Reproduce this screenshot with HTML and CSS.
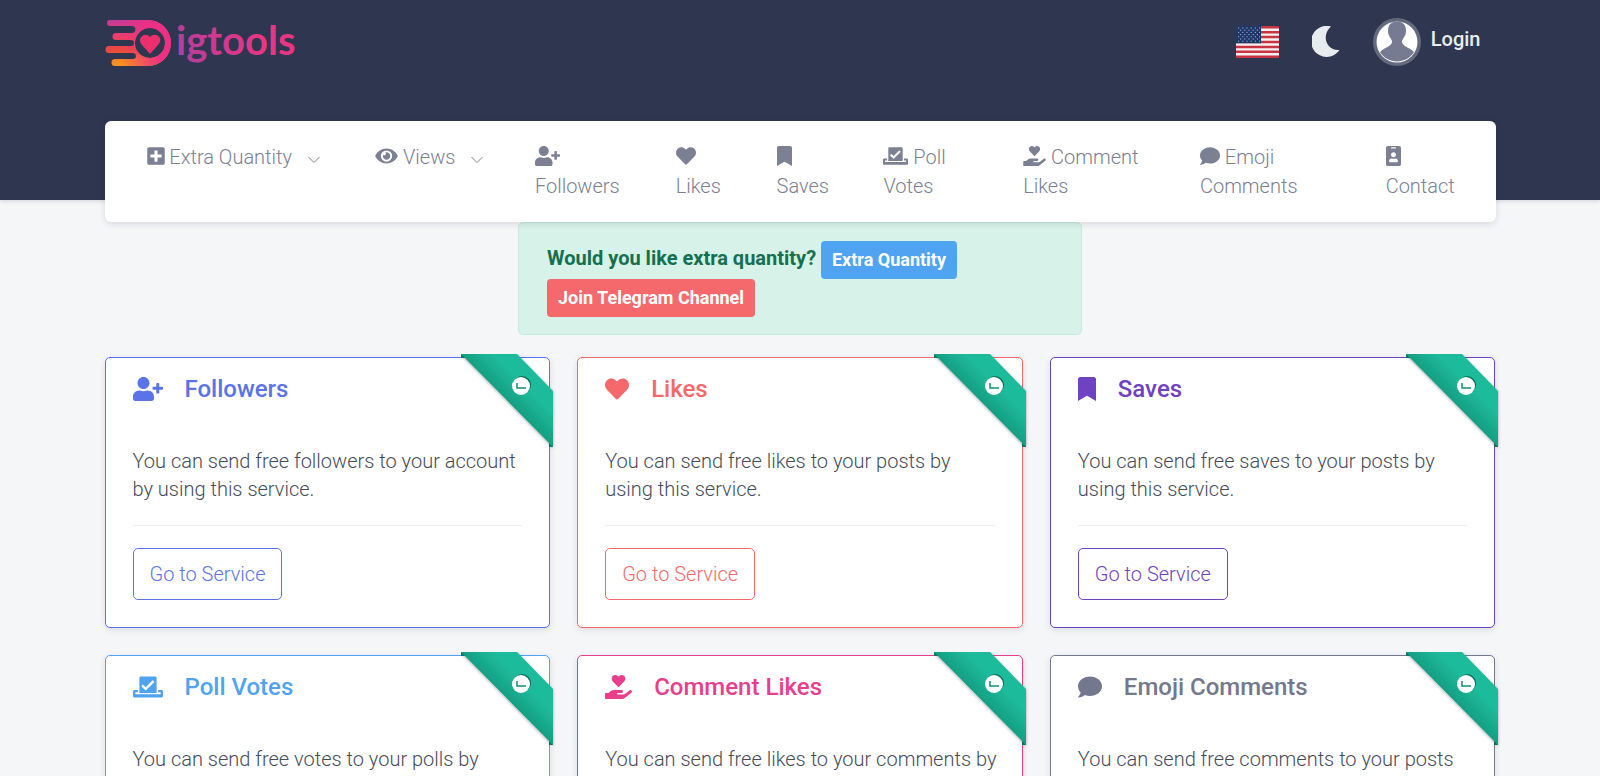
FILE: index.html
```html
<!DOCTYPE html>
<html lang="en">
<head>
<meta charset="utf-8">
<meta name="viewport" content="width=device-width, initial-scale=1">
<title>igtools</title>
<link rel="stylesheet" href="styles.css">
</head>
<body>
<svg class="sprite" aria-hidden="true">
  <symbol id="plus" viewBox="0 0 448 512"><path d="M400 32H48C21.500 32 0 53.500 0 80v352c0 26.500 21.500 48 48 48h352c26.500 0 48-21.500 48-48V80c0-26.500-21.500-48-48-48zm-32 252c0 6.600-5.400 12-12 12h-92v92c0 6.600-5.400 12-12 12h-56c-6.600 0-12-5.400-12-12v-92H92c-6.600 0-12-5.400-12-12v-56c0-6.600 5.400-12 12-12h92v-92c0-6.600 5.400-12 12-12h56c6.600 0 12 5.400 12 12v92h92c6.600 0 12 5.400 12 12v56z"/></symbol>
  <symbol id="eye" viewBox="0 0 576 512"><path d="M572.520 241.400C518.290 135.590 410.930 64 288 64S57.680 135.640 3.480 241.410a32.350 32.350 0 0 0 0 29.190C57.710 376.410 165.070 448 288 448s230.320-71.640 284.520-177.410a32.350 32.350 0 0 0 0-29.190zM288 400a144 144 0 1 1 144-144 143.930 143.930 0 0 1-144 144zm0-240a95.310 95.310 0 0 0-25.310 3.790 47.850 47.850 0 0 1-66.900 66.900A95.780 95.780 0 1 0 288 160z"/></symbol>
  <symbol id="user-plus" viewBox="0 0 640 512"><path d="M624 208h-64v-64c0-8.800-7.200-16-16-16h-32c-8.800 0-16 7.200-16 16v64h-64c-8.800 0-16 7.200-16 16v32c0 8.800 7.200 16 16 16h64v64c0 8.800 7.200 16 16 16h32c8.800 0 16-7.200 16-16v-64h64c8.800 0 16-7.200 16-16v-32c0-8.800-7.200-16-16-16zm-400 48c70.700 0 128-57.300 128-128S294.700 0 224 0 96 57.300 96 128s57.300 128 128 128zm89.600 32h-16.700c-22.200 10.200-46.900 16-72.900 16s-50.600-5.800-72.900-16h-16.700C60.200 288 0 348.200 0 422.400V464c0 26.500 21.500 48 48 48h352c26.500 0 48-21.500 48-48v-41.600c0-74.200-60.200-134.400-134.400-134.400z"/></symbol>
  <symbol id="heart" viewBox="0 0 512 512"><path d="M462.300 62.600C407.500 15.900 326 24.300 275.700 76.200L256 96.500l-19.700-20.300C186.100 24.300 104.500 15.900 49.700 62.600c-62.800 53.600-66.100 149.800-9.900 207.900l193.500 199.800c12.500 12.900 32.800 12.900 45.300 0l193.500-199.800c56.300-58.100 53-154.300-9.800-207.900z"/></symbol>
  <symbol id="bookmark" viewBox="0 0 384 512"><path d="M0 512V48C0 21.500 21.500 0 48 0h288c26.500 0 48 21.500 48 48v464L192 400 0 512z"/></symbol>
  <symbol id="ballot" viewBox="0 0 640 512"><path fill-rule="evenodd" d="M168 32h304c18 0 32 14 32 32v320H136V64c0-18 14-32 32-32zm102 227l-45-45c-7-7-18-7-25 0l-13 13c-7 7-7 18 0 25l70 70c7 7 18 7 25 0l164-164c7-7 7-18 0-25l-13-13c-7-7-18-7-25 0L270 259z"/><path d="M32 320h72v48H60c-6 0-10 4-10 10v22c0 6 4 10 10 10h520c6 0 10-4 10-10v-22c0-6-4-10-10-10h-44v-48h72c18 0 32 14 32 32v96c0 18-14 32-32 32H32c-18 0-32-14-32-32v-96c0-18 14-32 32-32z"/></symbol>
  <symbol id="hand-heart" viewBox="0 0 576 512"><path d="M275.300 250.500c7 7.400 18.400 7.400 25.500 0l108.900-114.200c31.600-33.200 29.800-88.200-5.600-118.800-30.800-26.700-76.700-21.900-104.900 7.700L288 36.900l-11.100-11.600C248.700-4.400 202.800-9.200 172 17.500c-35.300 30.600-37.200 85.600-5.600 118.800l108.900 114.200zm290 77.600c-11.800-10.700-30.200-10-42.600 0L430.300 402c-11.300 9.100-25.400 14-40 14H272c-8.800 0-16-7.200-16-16s7.200-16 16-16h78.300c15.900 0 30.700-10.900 33.300-26.600 3.300-20-12.100-37.400-31.600-37.400H192c-27 0-53.100 9.300-74.100 26.300L71.400 384H16c-8.800 0-16 7.200-16 16v96c0 8.800 7.200 16 16 16h356.800c14.500 0 28.600-4.900 40-14L564 377c15.200-12.100 16.400-35.300 1.300-48.900z"/></symbol>
  <symbol id="comment" viewBox="0 0 512 512"><path d="M256 32C114.600 32 0 125.100 0 240c0 49.600 21.400 95 57 130.700C44.500 421.100 2.700 466 2.200 466.500c-2.200 2.300-2.800 5.700-1.500 8.700S4.800 480 8 480c66.300 0 116-31.800 140.600-51.400 32.700 12.300 69 19.400 107.400 19.400 141.400 0 256-93.100 256-208S397.400 32 256 32z"/></symbol>
  <symbol id="badge" viewBox="0 0 384 512"><path d="M336 0H48C21.500 0 0 21.500 0 48v416c0 26.500 21.500 48 48 48h288c26.500 0 48-21.500 48-48V48c0-26.500-21.500-48-48-48zM144 32h96c8.800 0 16 7.200 16 16s-7.200 16-16 16h-96c-8.800 0-16-7.200-16-16s7.200-16 16-16zm48 128c35.300 0 64 28.700 64 64s-28.700 64-64 64-64-28.700-64-64 28.700-64 64-64zm112 236.800c0 10.600-10 19.200-22.400 19.200H102.400C90 416 80 407.400 80 396.800v-19.200c0-31.800 30.100-57.600 67.200-57.600h5c12.300 5.100 25.700 8 39.800 8s27.600-2.900 39.800-8h5c37.100 0 67.200 25.800 67.200 57.600v19.200z"/></symbol>
  <symbol id="ribbon" viewBox="0 0 100 100">
    <path d="M0 0h12v4H0zM88 80h4v13h-4z" fill="#0f8268"/>
    <path d="M0 0H56L92 37V93Z" fill="url(#band)" filter="url(#band-shadow)"/>
    <circle cx="61" cy="31" r="9" fill="#0b6b58"/>
    <circle cx="60" cy="32" r="9" fill="#fff"/>
    <path d="M56 29v5h9" fill="none" stroke="#0f8f75" stroke-width="1.500"/>
  </symbol>
  <defs>
    <linearGradient id="band" gradientUnits="userSpaceOnUse" x1="46" y1="46" x2="73" y2="19">
      <stop offset="0" stop-color="#179f83"/><stop offset=".6" stop-color="#1cbb9b"/><stop offset="1" stop-color="#1cbb9b"/>
    </linearGradient>
    <filter id="band-shadow"><feDropShadow dx="0" dy="1" stdDeviation="1.500" flood-opacity=".35"/></filter>
  </defs>
</svg>

<header class="header">
  <div class="container topbar">
    <a class="logo" href="#" aria-label="igtools">
      <svg width="200" height="60" viewBox="0 2 200 60">
        <defs>
          <linearGradient id="mark" gradientUnits="userSpaceOnUse" x1="12" y1="50" x2="10" y2="4">
            <stop offset="0" stop-color="#f7931e"/><stop offset=".12" stop-color="#f58a25"/><stop offset=".32" stop-color="#ec4a3a"/><stop offset=".65" stop-color="#ea3f6d"/><stop offset="1" stop-color="#c13a9b"/>
          </linearGradient>
          <linearGradient id="glow" gradientUnits="userSpaceOnUse" x1="14" y1="30" x2="52" y2="24">
            <stop offset="0" stop-color="#ee2f80" stop-opacity="0"/><stop offset="1" stop-color="#ee2f86"/>
          </linearGradient>
          <linearGradient id="word" gradientUnits="userSpaceOnUse" x1="70" y1="50" x2="150" y2="14">
            <stop offset="0" stop-color="#ad3fa0"/><stop offset="1" stop-color="#e93582"/>
          </linearGradient>
          <path id="comet" fill-rule="evenodd" d="M5 4H43A23 23 0 0 1 43 50H10A3 3 0 0 1 10 43H28A3 3 0 0 0 28 37H4A3 3 0 0 1 4 30H26A3 3 0 0 0 26 24H11A3 3 0 0 1 11 17H27A3 3 0 0 0 27 10H5A3 3 0 0 1 5 4ZM45 12A15 15 0 1 0 45 42A15 15 0 1 0 45 12Z"/>
        </defs>
        <use href="#comet" fill="url(#mark)"/>
        <use href="#comet" fill="url(#glow)"/>
        <path fill="#ee2f6d" d="M45 38L37 29C31 22 40 15 45 21C50 15 60 22 53 29Z"/>
        <text class="wordmark" x="71" y="39" fill="url(#word)">igtools</text>
      </svg>
    </a>
    <div class="tools">
      <button class="tool" type="button" aria-label="Language">
        <svg width="43" height="32" viewBox="0 0 43 32">
          <path fill="#f4f0f2" d="M0 0h43v32H0z"/>
          <path stroke="#c9323f" stroke-width="2.460" d="M0 1.230h43M0 6.150h43M0 11.080h43M0 16h43M0 20.920h43M0 25.850h43M0 30.770h43"/>
          <path fill="#1d3768" d="M0 0h25v17.230H0z"/>
          <path stroke="#a9b4cc" stroke-width="1" stroke-dasharray="1.200 3" d="M2 2h22M4 4.200h20M2 6.400h22M4 8.600h20M2 10.800h22M4 13h20M2 15.200h22"/>
        </svg>
      </button>
      <button class="tool" type="button" aria-label="Dark mode">
        <svg width="28" height="32" viewBox="0 2 28 32"><path fill="#e9ecef" d="M19 2.500A15.500 15.500 0 1 0 27.500 26C14 27 9 11 19 2.500Z"/></svg>
      </button>
      <a class="login" href="#">
        <svg width="48" height="48" viewBox="0 0 48 48">
          <circle cx="24" cy="24" r="24" fill="#646a7e"/><circle cx="24" cy="24" r="20.500" fill="#fff"/>
          <path fill="#777b92" d="M24 3.500C30 3.500 33 7 33 13C33 18 30 20 29 23C28 28 38 30 41 34A20 20 0 0 1 7 34C10 30 20 28 19 23C18 20 15 18 15 13C15 7 18 3.500 24 3.500Z"/>
        </svg>
        <span>Login</span>
      </a>
    </div>
  </div>
</header>

<nav class="container nav" aria-label="Main">
  <button class="item" type="button"><svg class="ico w18"><use href="#plus"/></svg> Extra Quantity <svg class="chev" viewBox="0 0 12 8"><path d="M.5 1L6 6.500 11.500 1"/></svg></button>
  <button class="item" type="button"><svg class="ico w23"><use href="#eye"/></svg> Views <svg class="chev" viewBox="0 0 12 8"><path d="M.5 1L6 6.500 11.500 1"/></svg></button>
  <a class="item" href="#"><svg class="ico w25"><use href="#user-plus"/></svg><br>Followers</a>
  <a class="item" href="#"><svg class="ico w20"><use href="#heart"/></svg><br>Likes</a>
  <a class="item" href="#"><svg class="ico w15"><use href="#bookmark"/></svg><br>Saves</a>
  <a class="item" href="#"><svg class="ico w25"><use href="#ballot"/></svg> Poll<br>Votes</a>
  <a class="item" href="#"><svg class="ico w23"><use href="#hand-heart"/></svg> Comment<br>Likes</a>
  <a class="item" href="#"><svg class="ico w20"><use href="#comment"/></svg> Emoji<br>Comments</a>
  <a class="item" href="#"><svg class="ico w15"><use href="#badge"/></svg><br>Contact</a>
</nav>

<main class="container">
  <div class="alert">
    <strong>Would you like extra quantity?</strong>
    <a class="pill blue" href="#">Extra Quantity</a>
    <a class="pill red" href="#">Join Telegram Channel</a>
  </div>
  <div class="cards">
    <section class="card indigo">
      <svg class="ribbon"><use href="#ribbon"/></svg>
      <h2><svg class="big b30"><use href="#user-plus"/></svg>Followers</h2>
      <p>You can send free followers to your account by using this service.</p>
      <hr>
      <a class="go" href="#">Go to Service</a>
    </section>
    <section class="card coral">
      <svg class="ribbon"><use href="#ribbon"/></svg>
      <h2><svg class="big b24"><use href="#heart"/></svg>Likes</h2>
      <p>You can send free likes to your posts by using this service.</p>
      <hr>
      <a class="go" href="#">Go to Service</a>
    </section>
    <section class="card purple">
      <svg class="ribbon"><use href="#ribbon"/></svg>
      <h2><svg class="big b18"><use href="#bookmark"/></svg>Saves</h2>
      <p>You can send free saves to your posts by using this service.</p>
      <hr>
      <a class="go" href="#">Go to Service</a>
    </section>
    <section class="card azure">
      <svg class="ribbon"><use href="#ribbon"/></svg>
      <h2><svg class="big b30"><use href="#ballot"/></svg>Poll Votes</h2>
      <p>You can send free votes to your polls by using this service.</p>
      <hr>
      <a class="go" href="#">Go to Service</a>
    </section>
    <section class="card pink">
      <svg class="ribbon"><use href="#ribbon"/></svg>
      <h2><svg class="big b27"><use href="#hand-heart"/></svg>Comment Likes</h2>
      <p>You can send free likes to your comments by using this service.</p>
      <hr>
      <a class="go" href="#">Go to Service</a>
    </section>
    <section class="card gray">
      <svg class="ribbon"><use href="#ribbon"/></svg>
      <h2><svg class="big b24"><use href="#comment"/></svg>Emoji Comments</h2>
      <p>You can send free comments to your posts by using this service.</p>
      <hr>
      <a class="go" href="#">Go to Service</a>
    </section>
  </div>
</main>
</body>
</html>
```

FILE: styles.css
```css
* { box-sizing: border-box; }
body {
  margin: 0;
  background: #f4f6f8;
  color: #454c5a;
  font: 300 20px/29px Roboto, "Liberation Sans", sans-serif;
  overflow-x: hidden;
}
a { color: inherit; text-decoration: none; }
button { font: inherit; color: inherit; background: none; border: 0; padding: 0; text-align: left; cursor: pointer; }
.sprite { position: absolute; width: 0; height: 0; }
.container { width: calc(100% - 32px); max-width: 1391px; margin: 0 auto; }

.header { background: #2f364f; padding: 18px 0 80px; box-shadow: 0 2px 4px rgba(40, 45, 70, .12); }
.topbar { display: flex; justify-content: space-between; min-height: 102px; align-items: flex-start; }
.logo svg { display: block; overflow: visible; }
.wordmark { font: 700 40px Lato, sans-serif; }
.tools { display: flex; align-items: center; gap: 33px; padding-right: 15px; color: #e9ecef; }
.tool svg { display: block; }
.login { display: flex; align-items: center; gap: 10px; font-weight: 500; }
.login span { padding-bottom: 5px; }

.nav {
  display: grid;
  grid-template-columns: 229fr 160fr 141fr 101fr 107fr 140fr 177fr 186fr 110fr;
  align-items: start;
  margin-top: -79px;
  padding: 22px 0 21px 42px;
  background: #fff;
  border-radius: 6px;
  box-shadow: 0 2px 6px rgba(40, 45, 70, .14);
  color: #7b8093;
  position: relative;
}
.item { white-space: nowrap; }
.ico { height: 20px; fill: currentColor; vertical-align: -2px; }
.w15 { width: 15px; }
.w18 { width: 18px; }
.w20 { width: 20px; }
.w23 { width: 23px; }
.w25 { width: 25px; }
.chev { width: 12px; height: 8px; margin-left: 11px; fill: none; stroke: currentColor; }

.alert {
  width: 564px;
  max-width: 100%;
  margin: 0 auto 22px;
  padding: 18px 28px 17px;
  background: #d7f2e8;
  border: 1px solid #c3ecdd;
  border-radius: 5px;
  color: #16704f;
}
.alert strong { font-weight: 700; }
.pill {
  display: inline-block;
  padding: 4px 11px;
  line-height: 30px;
  font-size: 18px;
  font-weight: 700;
  color: #fff;
  border-radius: 4px;
  vertical-align: middle;
}
.blue { background: #4fa3f1; }
.red { background: #f5686b; }

.cards { display: grid; grid-template-columns: repeat(auto-fit, minmax(360px, 1fr)); gap: 27px; }
.card {
  position: relative;
  padding: 17px 27px 27px;
  background: #fff;
  border: 1px solid currentColor;
  border-radius: 5px;
  box-shadow: 0 2px 6px rgba(40, 45, 70, .12);
}
.card h2 { display: flex; align-items: center; gap: 22px; margin: 0 0 44px; font-size: 24px; line-height: 28px; font-weight: 500; }
.card p { margin: 0 -5px 0 0; line-height: 28px; color: #454c5a; }
.card hr { margin: 22px 0; border: 0; border-top: 1px solid #eaecef; }
.big { height: 24px; fill: currentColor; }
.b18 { width: 18px; }
.b24 { width: 24px; }
.b27 { width: 27px; }
.b30 { width: 30px; }
.ribbon { position: absolute; top: -4px; right: -12px; width: 100px; height: 100px; }
.go { display: inline-block; padding: 11px 16px; line-height: 28px; border: 1px solid currentColor; border-radius: 5px; }
.indigo { color: #5b73e8; }
.coral { color: #f5686b; }
.purple { color: #6f42c1; }
.azure { color: #4fa3f1; }
.pink { color: #e83e8c; }
.gray { color: #74788d; }
```
